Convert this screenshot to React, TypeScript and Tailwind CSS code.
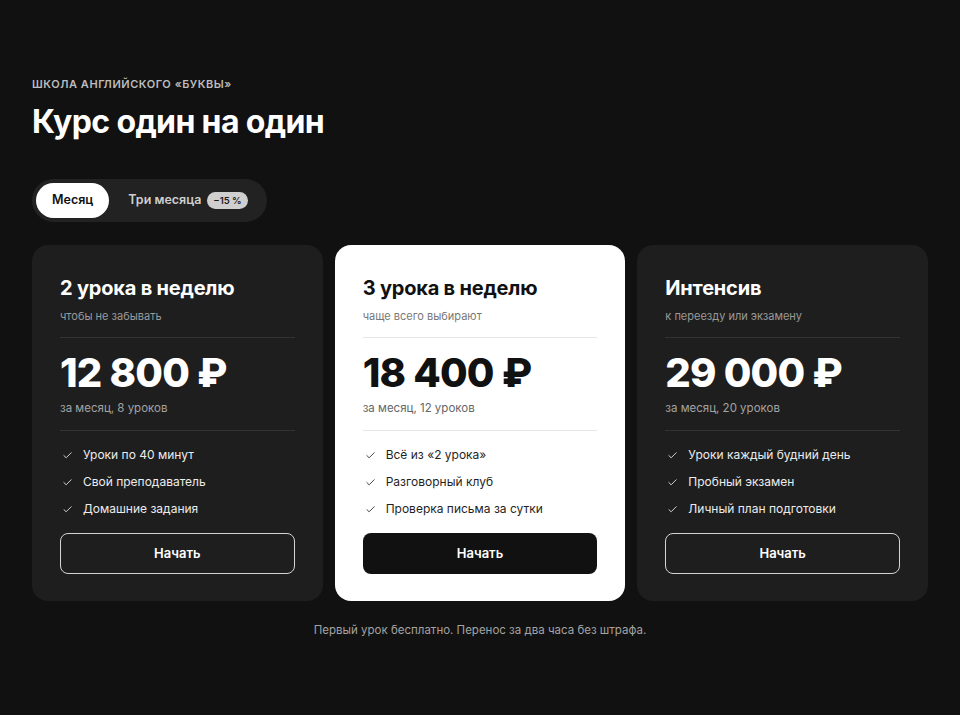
import React, { useState } from 'react';
import { Check } from 'lucide-react';

type Plan = {
  title: string;
  subtitle: string;
  price: string;
  note: string;
  features: string[];
  featured?: boolean;
};

const plans: Plan[] = [
  {
    title: '2 урока в неделю',
    subtitle: 'чтобы не забывать',
    price: '12 800 ₽',
    note: 'за месяц, 8 уроков',
    features: ['Уроки по 40 минут', 'Свой преподаватель', 'Домашние задания'],
  },
  {
    title: '3 урока в неделю',
    subtitle: 'чаще всего выбирают',
    price: '18 400 ₽',
    note: 'за месяц, 12 уроков',
    features: ['Всё из «2 урока»', 'Разговорный клуб', 'Проверка письма за сутки'],
    featured: true,
  },
  {
    title: 'Интенсив',
    subtitle: 'к переезду или экзамену',
    price: '29 000 ₽',
    note: 'за месяц, 20 уроков',
    features: ['Уроки каждый будний день', 'Пробный экзамен', 'Личный план подготовки'],
  },
];

const PlanCard: React.FC<{ plan: Plan }> = ({ plan }) => {
  const light = plan.featured;
  return (
    <div
      className={
        light
          ? 'rounded-2xl bg-white px-7 pt-[29px] pb-[27px] text-[#111]'
          : 'rounded-2xl bg-[#1e1e1e] px-7 pt-[29px] pb-[27px] text-white'
      }
    >
      <h2 className="text-[20px] leading-7 font-bold tracking-[-0.01em]">{plan.title}</h2>
      <p className={light ? 'mt-[6px] text-[11px] leading-4 text-[#777]' : 'mt-[6px] text-[11px] leading-4 text-[#9a9a9a]'}>
        {plan.subtitle}
      </p>
      <div className={light ? 'mt-[13px] border-t border-[#e6e6e6]' : 'mt-[13px] border-t border-[#333]'} />
      <div className="mt-[11px] text-[40px] leading-[48px] font-extrabold tracking-[-0.02em]">{plan.price}</div>
      <p className={light ? 'mt-[2px] text-[11.5px] leading-[18px] text-[#666]' : 'mt-[2px] text-[11.5px] leading-[18px] text-[#a3a3a3]'}>
        {plan.note}
      </p>
      <div className={light ? 'mt-[13px] border-t border-[#e6e6e6]' : 'mt-[13px] border-t border-[#333]'} />
      <ul className="mt-[14px] flex flex-col gap-[7px]">
        {plan.features.map((f) => (
          <li key={f} className="flex items-center gap-[10px] pl-[2px] text-[12px] leading-5">
            <Check className={light ? 'w-[11px] h-[11px] text-[#333]' : 'w-[11px] h-[11px] text-[#e0e0e0]'} strokeWidth={2} />
            <span className={light ? 'text-[#1f1f1f]' : 'text-[#ececec]'}>{f}</span>
          </li>
        ))}
      </ul>
      <button
        className={
          light
            ? 'mt-[14px] w-full h-[41px] rounded-lg bg-[#111] text-white text-[13px] font-semibold'
            : 'mt-[14px] w-full h-[41px] rounded-lg border border-[#d4d4d4] bg-transparent text-white text-[13px] font-semibold'
        }
      >
        Начать
      </button>
    </div>
  );
};

export default function App() {
  const [period, setPeriod] = useState<'month' | 'quarter'>('month');

  return (
    <div
      className="bg-[#111111] text-white px-8 pt-[76px] pb-[75px]"
      style={{ fontFamily: 'Inter, "Noto Sans", sans-serif' }}
    >
      <p className="text-[11px] leading-4 font-semibold tracking-[0.05em] text-[#bdbdbd]">
        ШКОЛА АНГЛИЙСКОГО «БУКВЫ»
      </p>
      <h1 className="mt-[10px] text-[32px] leading-10 font-bold tracking-[-0.02em]">Курс один на один</h1>

      <div className="mt-[37px] inline-flex items-center rounded-full bg-[#222] p-1">
        <button
          onClick={() => setPeriod('month')}
          className={
            period === 'month'
              ? 'h-[35px] rounded-full bg-white px-4 text-[12.5px] font-semibold text-[#111]'
              : 'h-[35px] rounded-full px-4 text-[12.5px] font-semibold text-[#cfcfcf]'
          }
        >
          Месяц
        </button>
        <button
          onClick={() => setPeriod('quarter')}
          className={
            period === 'quarter'
              ? 'h-[35px] rounded-full bg-white pl-[19px] pr-[15px] text-[12.5px] font-semibold text-[#111] flex items-center gap-[6px]'
              : 'h-[35px] rounded-full pl-[19px] pr-[15px] text-[12.5px] font-semibold text-[#cfcfcf] flex items-center gap-[6px]'
          }
        >
          Три месяца
          <span className="rounded-full bg-[#cfcfcf] px-[6px] py-[1px] text-[9.5px] leading-[15px] font-semibold text-[#1a1a1a]">
            −15 %
          </span>
        </button>
      </div>

      <div className="mt-[23px] grid grid-cols-3 gap-3">
        {plans.map((p) => (
          <PlanCard key={p.title} plan={p} />
        ))}
      </div>

      <p className="mt-[19px] text-center text-[11.5px] leading-5 text-[#a3a3a3]">
        Первый урок бесплатно. Перенос за два часа без штрафа.
      </p>
    </div>
  );
}
